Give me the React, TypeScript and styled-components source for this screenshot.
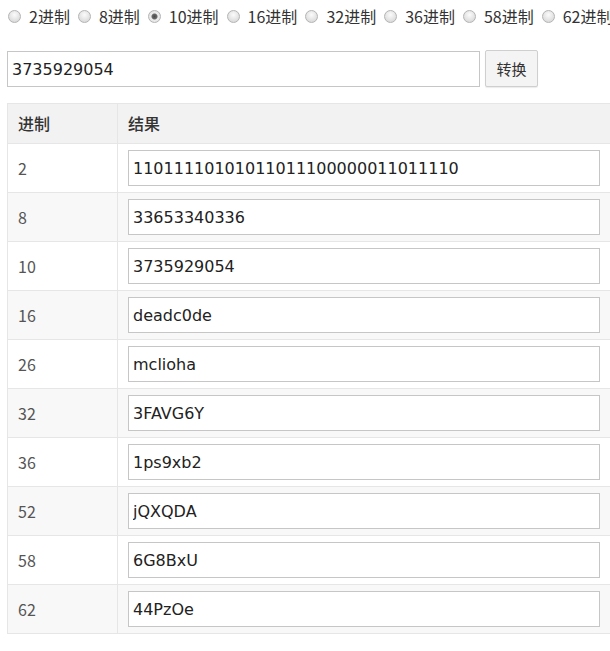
import { useState } from 'react';
import styled, { createGlobalStyle } from 'styled-components';

type ResultRow = {
  base: number;
  value: string;
};

const BASES = [2, 8, 10, 16, 32, 36, 58, 62];

const RESULTS: ResultRow[] = [
  { base: 2, value: '11011110101011011100000011011110' },
  { base: 8, value: '33653340336' },
  { base: 10, value: '3735929054' },
  { base: 16, value: 'deadc0de' },
  { base: 26, value: 'mclioha' },
  { base: 32, value: '3FAVG6Y' },
  { base: 36, value: '1ps9xb2' },
  { base: 52, value: 'jQXQDA' },
  { base: 58, value: '6G8BxU' },
  { base: 62, value: '44PzOe' },
];

const GlobalStyle = createGlobalStyle`
  html, body {
    margin: 0;
    padding: 0;
    background: #fff;
    overflow: hidden;
  }
  body {
    font-family: "Noto Sans CJK SC", "Noto Sans", sans-serif;
    color: #333;
  }
`;

function App() {
  const [base, setBase] = useState(10);
  const [input, setInput] = useState('3735929054');

  return (
    <Page>
      <GlobalStyle />
      <RadioBar>
        {BASES.map((b) => (
          <RadioLabel key={b}>
            <Radio type="radio" name="base" checked={base === b} onChange={() => setBase(b)} />
            {b}进制
          </RadioLabel>
        ))}
      </RadioBar>
      <ConvertRow>
        <MainInput value={input} onChange={(e) => setInput(e.target.value)} />
        <ConvertBtn>转换</ConvertBtn>
      </ConvertRow>
      <ResultTable>
        <thead>
          <tr>
            <HeadCell $first>进制</HeadCell>
            <HeadCell>结果</HeadCell>
          </tr>
        </thead>
        <tbody>
          {RESULTS.map((row, index) => (
            <BodyRow key={`${row.base}-${index + 1}`} $even={index % 2 === 1}>
              <BaseCell>{row.base}</BaseCell>
              <ValueCell>
                <ValueInput readOnly value={row.value} />
              </ValueCell>
            </BodyRow>
          ))}
        </tbody>
      </ResultTable>
    </Page>
  );
}

export default App;

const Page = styled.div`
  width: 660px;
  padding: 0 0 0 7px;
`;

const RadioBar = styled.div`
  display: flex;
  align-items: center;
  height: 32px;
  white-space: nowrap;
`;

const RadioLabel = styled.label`
  display: flex;
  align-items: center;
  font-size: 16px;
  color: #333;
  margin-right: 7px;
`;

const Radio = styled.input`
  appearance: none;
  width: 13px;
  height: 13px;
  margin: 0 8px 0 1px;
  border-radius: 50%;
  border: 1px solid #b4b4b4;
  box-sizing: border-box;
  background: radial-gradient(circle at 50% 35%, #fbfbfb 0%, #e2e2e2 60%, #d0d0d0 100%);

  &:checked {
    background: radial-gradient(circle, #4a4a4a 0, #6a6a6a 2.5px, #ececec 3.5px, #dcdcdc 100%);
  }
`;

const ConvertRow = styled.div`
  display: flex;
  align-items: flex-start;
  margin-top: 18px;
`;

const MainInput = styled.input`
  width: 473px;
  height: 36px;
  margin-top: 1px;
  box-sizing: border-box;
  border: 1px solid #c6c6c6;
  padding: 0 4px;
  font-family: "DejaVu Sans", Verdana, sans-serif;
  font-size: 16px;
  color: #222;
  outline: none;
`;

const ConvertBtn = styled.button`
  width: 53px;
  height: 37px;
  margin-left: 5px;
  border: 1px solid #cfcfcf;
  border-radius: 2px;
  background: #f4f4f4;
  font-family: "Noto Sans CJK SC", sans-serif;
  font-size: 15px;
  color: #333;
  padding: 0;
  box-shadow: 0 1px 1px rgba(0, 0, 0, 0.08);
`;

const ResultTable = styled.table`
  width: 660px;
  margin-top: 16px;
  border-collapse: collapse;
  border: 1px solid #e6e6e6;
`;

const HeadCell = styled.th<{ $first?: boolean }>`
  width: ${({ $first }) => ($first ? '89px' : 'auto')};
  padding: 9px 10px;
  line-height: 21px;
  text-align: left;
  font-size: 16px;
  font-weight: 500;
  color: #333;
  background: #f2f2f2;
  border: 1px solid #e6e6e6;
`;

const BodyRow = styled.tr<{ $even: boolean }>`
  background: ${({ $even }) => ($even ? '#f8f8f8' : '#fff')};
`;

const BaseCell = styled.td`
  padding: 0 10px;
  height: 48px;
  font-size: 16px;
  color: #555;
  border: 1px solid #e6e6e6;
`;

const ValueCell = styled.td`
  padding: 6px 10px;
  border: 1px solid #e6e6e6;
`;

const ValueInput = styled.input`
  display: block;
  width: 472px;
  height: 36px;
  box-sizing: border-box;
  border: 1px solid #c6c6c6;
  padding: 0 4px;
  background: #fff;
  font-family: "DejaVu Sans", Verdana, sans-serif;
  font-size: 16px;
  color: #222;
  outline: none;
`;
